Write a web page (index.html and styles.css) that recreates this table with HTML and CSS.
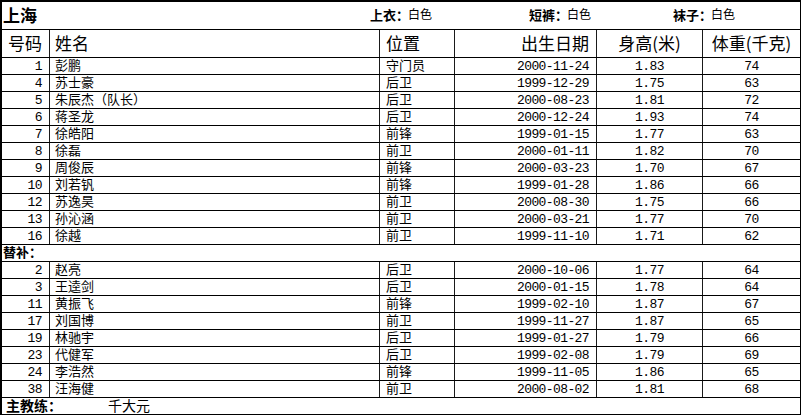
FILE: index.html
```html
<!DOCTYPE html>
<html lang="zh-CN">
<head>
<meta charset="utf-8">
<title>上海</title>
<link rel="stylesheet" href="styles.css">
</head>
<body>
<div class="sheet">
  <div class="title-row">
    <div class="team">上海</div>
    <div class="kit"><b>上衣：</b><span>白色</span></div>
    <div class="kit"><b>短裤：</b><span>白色</span></div>
    <div class="kit"><b>袜子：</b><span>白色</span></div>
  </div>
  <div class="row head">
    <div class="c num">号码</div>
    <div class="c name">姓名</div>
    <div class="c pos">位置</div>
    <div class="c date">出生日期</div>
    <div class="c ht">身高(米)</div>
    <div class="c wt">体重(千克)</div>
  </div>
  <div class="row"><div class="c num">1</div><div class="c name">彭鹏</div><div class="c pos">守门员</div><div class="c date">2000-11-24</div><div class="c ht">1.83</div><div class="c wt">74</div></div>
  <div class="row"><div class="c num">4</div><div class="c name">苏士豪</div><div class="c pos">后卫</div><div class="c date">1999-12-29</div><div class="c ht">1.75</div><div class="c wt">63</div></div>
  <div class="row"><div class="c num">5</div><div class="c name">朱辰杰（队长）</div><div class="c pos">后卫</div><div class="c date">2000-08-23</div><div class="c ht">1.81</div><div class="c wt">72</div></div>
  <div class="row"><div class="c num">6</div><div class="c name">蒋圣龙</div><div class="c pos">后卫</div><div class="c date">2000-12-24</div><div class="c ht">1.93</div><div class="c wt">74</div></div>
  <div class="row"><div class="c num">7</div><div class="c name">徐皓阳</div><div class="c pos">前锋</div><div class="c date">1999-01-15</div><div class="c ht">1.77</div><div class="c wt">63</div></div>
  <div class="row"><div class="c num">8</div><div class="c name">徐磊</div><div class="c pos">前卫</div><div class="c date">2000-01-11</div><div class="c ht">1.82</div><div class="c wt">70</div></div>
  <div class="row"><div class="c num">9</div><div class="c name">周俊辰</div><div class="c pos">前锋</div><div class="c date">2000-03-23</div><div class="c ht">1.70</div><div class="c wt">67</div></div>
  <div class="row"><div class="c num">10</div><div class="c name">刘若钒</div><div class="c pos">前锋</div><div class="c date">1999-01-28</div><div class="c ht">1.86</div><div class="c wt">66</div></div>
  <div class="row"><div class="c num">12</div><div class="c name">苏逸昊</div><div class="c pos">前卫</div><div class="c date">2000-08-30</div><div class="c ht">1.75</div><div class="c wt">66</div></div>
  <div class="row"><div class="c num">13</div><div class="c name">孙沁涵</div><div class="c pos">前卫</div><div class="c date">2000-03-21</div><div class="c ht">1.77</div><div class="c wt">70</div></div>
  <div class="row"><div class="c num">16</div><div class="c name">徐越</div><div class="c pos">前卫</div><div class="c date">1999-11-10</div><div class="c ht">1.71</div><div class="c wt">62</div></div>
  <div class="row span"><div class="label">替补：</div></div>
  <div class="row"><div class="c num">2</div><div class="c name">赵亮</div><div class="c pos">后卫</div><div class="c date">2000-10-06</div><div class="c ht">1.77</div><div class="c wt">64</div></div>
  <div class="row"><div class="c num">3</div><div class="c name">王逵剑</div><div class="c pos">后卫</div><div class="c date">2000-01-15</div><div class="c ht">1.78</div><div class="c wt">64</div></div>
  <div class="row"><div class="c num">11</div><div class="c name">黄振飞</div><div class="c pos">前锋</div><div class="c date">1999-02-10</div><div class="c ht">1.87</div><div class="c wt">67</div></div>
  <div class="row"><div class="c num">17</div><div class="c name">刘国博</div><div class="c pos">前卫</div><div class="c date">1999-11-27</div><div class="c ht">1.87</div><div class="c wt">65</div></div>
  <div class="row"><div class="c num">19</div><div class="c name">林驰宇</div><div class="c pos">后卫</div><div class="c date">1999-01-27</div><div class="c ht">1.79</div><div class="c wt">66</div></div>
  <div class="row"><div class="c num">23</div><div class="c name">代健军</div><div class="c pos">后卫</div><div class="c date">1999-02-08</div><div class="c ht">1.79</div><div class="c wt">69</div></div>
  <div class="row"><div class="c num">24</div><div class="c name">李浩然</div><div class="c pos">前锋</div><div class="c date">1999-11-05</div><div class="c ht">1.86</div><div class="c wt">65</div></div>
  <div class="row"><div class="c num">38</div><div class="c name">汪海健</div><div class="c pos">前卫</div><div class="c date">2000-08-02</div><div class="c ht">1.81</div><div class="c wt">68</div></div>
  <div class="row span coach"><div class="label">主教练：</div><div class="coach-name">千大元</div></div>
</div>
</body>
</html>
```
FILE: styles.css
```css
html, body {
  margin: 0;
  padding: 0;
  background: #fff;
}
body {
  width: 804px;
  height: 418px;
  overflow: hidden;
  font-family: "Noto Sans CJK SC", sans-serif;
  color: #000;
}
.sheet {
  box-sizing: border-box;
  width: 801px;
  border-left: 2px solid #000;
  border-top: 2px solid #000;
  border-right: 1px solid #000;
}
.title-row {
  box-sizing: border-box;
  height: 28px;
  padding-bottom: 3px;
  border-bottom: 1px solid #000;
  display: grid;
  grid-template-columns: 368px 159px 144px 1fr;
  align-items: center;
}
.team {
  padding-left: 1px;
  font-size: 17px;
  font-weight: bold;
  line-height: 1;
}
.kit {
  white-space: nowrap;
  line-height: 1;
  display: flex;
  align-items: center;
}
.kit b {
  font-size: 13px;
  font-weight: bold;
}
.kit span {
  font-size: 12px;
  margin-left: -1px;
}
.row {
  box-sizing: border-box;
  height: 17px;
  border-bottom: 1px solid #000;
  display: grid;
  grid-template-columns: 48px 330px 75px 142px 106px 97px;
}
.row.head {
  height: 28px;
}
.c {
  box-sizing: border-box;
  border-right: 1px solid #1a1a1a;
  display: flex;
  align-items: center;
  white-space: nowrap;
  font-size: 13px;
  line-height: 1;
}
.c.wt {
  border-right: none;
}
.name, .pos {
  padding-bottom: 3px;
}
.num, .date, .ht, .wt {
  font-family: "Liberation Mono", monospace;
  font-size: 13px;
  letter-spacing: -0.6px;
}
.num {
  justify-content: flex-end;
  padding-right: 7px;
}
.name {
  padding-left: 5px;
}
.pos {
  padding-left: 6px;
}
.date {
  justify-content: flex-end;
  padding-right: 7px;
}
.ht, .wt {
  justify-content: center;
}
.head .c {
  font-family: "Noto Sans CJK SC", sans-serif;
  font-size: 17px;
  letter-spacing: 0;
  padding-bottom: 3px;
}
.row.span {
  display: flex;
  align-items: center;
  padding-bottom: 3px;
}
.label {
  padding-left: 1px;
  font-size: 13px;
  font-weight: bold;
  line-height: 1;
}
.coach .label {
  padding-left: 4px;
  font-size: 14px;
}
.coach-name {
  margin-left: 46px;
  font-size: 14px;
  line-height: 1;
}
```
